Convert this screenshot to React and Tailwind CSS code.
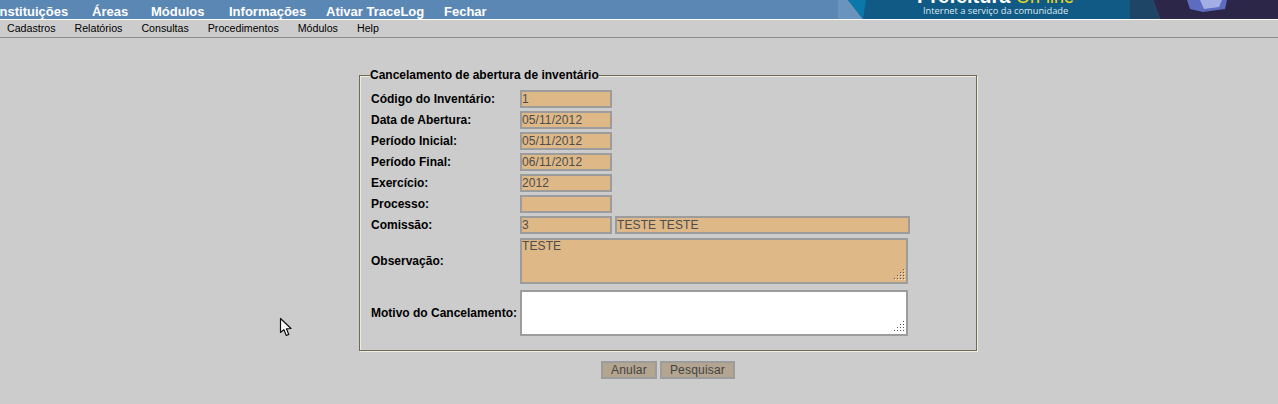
import { useState } from 'react'

const topMenu = [
  { label: 'Instituições', className: 'ml-[-4px] w-[96px]' },
  { label: 'Áreas', className: 'w-[59px]' },
  { label: 'Módulos', className: 'w-[78px]' },
  { label: 'Informações', className: 'w-[97px]' },
  { label: 'Ativar TraceLog', className: 'w-[118px]' },
  { label: 'Fechar', className: '' },
]
const subMenu = ['Cadastros', 'Relatórios', 'Consultas', 'Procedimentos', 'Módulos', 'Help']

const roField = 'block h-[18px] border-2 border-[#9c9c9c] bg-[#deb887] px-0 text-[12px] tracking-[0.1px] text-[#4d4d4d] outline-none'
const labelCls = 'w-[149px] text-[12px] font-bold text-black'
const btnCls = 'h-[18px] border-2 border-[#9c9c9c] bg-[#b3a58f] text-[12px] leading-[14px] tracking-[0.2px] text-[#444]'

function Row({ label, children }) {
  return (
    <div className="flex h-[21px] items-center">
      <div className={labelCls}>{label}</div>
      <div className="flex gap-[3px]">{children}</div>
    </div>
  )
}

function Field({ value, wide }) {
  return <input readOnly value={value} className={`${roField} ${wide ? 'w-[295px]' : 'w-[92px]'}`} />
}

function Grip({ light }) {
  const dots = [[9, 0], [9, 3], [6, 3], [9, 6], [6, 6], [3, 6], [9, 9], [6, 9], [3, 9], [0, 9]]
  return (
    <svg width="12" height="12" viewBox="0 0 12 12" className="absolute bottom-[3px] right-[2px]">
      {light && dots.map(([x, y]) => <rect key={`l${x}-${y}`} x={x + 1} y={y + 1} width="1" height="1" fill="#fbeedb" />)}
      {dots.map(([x, y]) => <rect key={`${x}-${y}`} x={x} y={y} width="1" height="1" fill="#5a5a5a" />)}
    </svg>
  )
}

function Cursor() {
  return (
    <svg width="14" height="20" viewBox="0 0 14 20" className="absolute left-[279px] top-[317px]">
      <path d="M1.5 1.5 L1.5 15.5 L4.8 12.6 L7.3 18.5 L9.8 17.4 L7.4 11.8 L12 11.5 Z" fill="#fff" stroke="#111" strokeWidth="1.2" strokeLinejoin="round" />
    </svg>
  )
}

export default function App() {
  const [motivo, setMotivo] = useState('')

  return (
    <div className='relative h-[404px] w-[1278px] overflow-hidden bg-[#cccccc] font-["Liberation_Sans",Arial,sans-serif]'>
      {/* top bar */}
      <div className="flex h-[19px] overflow-hidden bg-[#5b87b5]">
        <div className="flex flex-1 pt-[4px] text-[13px] leading-[15px] font-bold text-white">
          {topMenu.map(m => <span key={m.label} className={`shrink-0 ${m.className}`}>{m.label}</span>)}
        </div>
        <svg width="440" height="19" viewBox="0 0 440 19" className="shrink-0">
          <path d="M0 0 H10 L25 19 H0 Z" fill="#6a94bd" />
          <path d="M10 0 H292 V19 H25 Z" fill="#105a85" />
          <path d="M10 0 H28 L25 19 Z" fill="#0a78a8" />
          <path d="M292 0 H315 L322 19 H292 Z" fill="#1f4566" />
          <path d="M315 0 H440 V19 H322 Z" fill="#2c2748" />
          <path d="M349 0 H389 L387 9 L365 12 L352 9 Z" fill="#5d6cc0" />
          <path d="M362 0 H384 L381 7 L366 9 Z" fill="#a3aee4" />
          <text x="79" y="3" fontSize="20" fontWeight="700" fill="#fff" fontFamily="Liberation Sans">Prefeitura</text>
          <text x="178" y="3" fontSize="18" fill="#e6d81f" fontFamily="Liberation Sans">On-line</text>
          <text x="85" y="14" fontSize="9.3" fill="#dbe7ef" fontFamily="Open Sans">Internet a serviço da comunidade</text>
        </svg>
      </div>

      {/* submenu */}
      <div className="flex h-[19px] gap-[19px] border-t border-b border-t-white border-b-[#8c8c8c] pl-[7px] pt-px text-[10.65px] leading-[14px] text-black">
        {subMenu.map(m => <span key={m}>{m}</span>)}
      </div>

      <div className="flex flex-col items-center pl-[58px] pt-[31px]">
        <fieldset className="h-[282px] w-[618px] border border-[#6f6a58] px-[11px] shadow-[inset_1px_1px_0_#eeeee0,1px_1px_0_#eeeee0]">
          <legend className="-ml-px bg-[#cccccc] text-[12px] font-bold leading-[13px] text-black">Cancelamento de abertura de inventário</legend>
          <div className="pt-[6px]">
            <Row label="Código do Inventário:"><Field value="1" /></Row>
            <Row label="Data de Abertura:"><Field value="05/11/2012" /></Row>
            <Row label="Período Inicial:"><Field value="05/11/2012" /></Row>
            <Row label="Período Final:"><Field value="06/11/2012" /></Row>
            <Row label="Exercício:"><Field value="2012" /></Row>
            <Row label="Processo:"><Field value="" /></Row>
            <Row label="Comissão:"><Field value="3" /><Field value="TESTE TESTE" wide /></Row>
            <div className="mt-[3px] flex items-center">
              <div className={labelCls}>Observação:</div>
              <div className="relative">
                <textarea readOnly value="TESTE" className={`${roField} h-[46px] w-[388px] resize-none leading-[13px]`} />
                <Grip light />
              </div>
            </div>
            <div className="mt-[6px] flex items-center">
              <div className={labelCls}>Motivo do Cancelamento:</div>
              <div className="relative">
                <textarea value={motivo} onChange={e => setMotivo(e.target.value)} className="block h-[46px] w-[388px] resize-none border-2 border-[#9c9c9c] bg-white text-[12px] text-[#4d4d4d] outline-none" />
                <Grip />
              </div>
            </div>
          </div>
        </fieldset>

        <div className="mt-[10px] flex gap-[3px]">
          <button className={`${btnCls} w-[56px]`}>Anular</button>
          <button className={`${btnCls} w-[75px]`}>Pesquisar</button>
        </div>
      </div>

      <Cursor />
    </div>
  )
}
